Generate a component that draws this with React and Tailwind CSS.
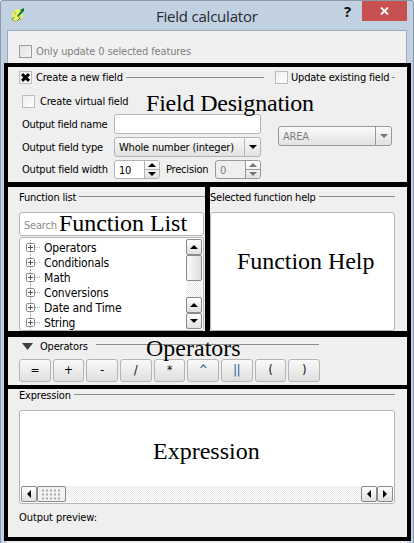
import React from "react";

const edge = "border border-[#b4b4b4] rounded-[3px]";

function Check({ checked, dim }) {
  return (
    <span className={`relative block h-[13px] w-[13px] shrink-0 border bg-gradient-to-br ${dim ? "border-[#9c9c9c] from-[#e4e4e4] to-[#f3f3f3]" : "border-[#bcbcbc] from-[#eeeeee] to-white"}`}>
      {checked && (
        <svg className="block h-[11px] w-[11px]" viewBox="0 0 11 11">
          <path d="M2 2.2L9 8.8M9 2.2L2 8.8" stroke="#000" strokeWidth="3" />
        </svg>
      )}
    </span>
  );
}

function Arrow({ dir, color = "#000" }) {
  const paths = {
    up: "M0 5L4 1L8 5Z",
    down: "M0 1L4 5L8 1Z",
    left: "M6 -1L2 3L6 7Z",
    right: "M2 -1L6 3L2 7Z",
  };
  return (
    <svg className="block h-[6px] w-[8px] overflow-visible" viewBox="0 0 8 6">
      <path d={paths[dir]} fill={color} />
    </svg>
  );
}

function Spin({ value, dim }) {
  const line = dim ? "border-[#999]" : "border-[#b4b4b4]";
  return (
    <div className={`flex h-[19px] w-[46px] shrink-0 overflow-hidden rounded-[3px] border ${line} ${dim ? "bg-[#efefef] text-[#808080]" : "bg-white"}`}>
      <span className="w-[29px] pl-[4px] leading-[19px]">{value}</span>
      <span className={`flex w-[15px] flex-col border-l ${line} bg-gradient-to-b from-white to-[#e2e2e2]`}>
        <span className={`flex h-[9px] items-center justify-center border-b ${line}`}><Arrow dir="up" color={dim ? "#777" : "#000"} /></span>
        <span className="flex h-[8px] items-center justify-center"><Arrow dir="down" color={dim ? "#777" : "#000"} /></span>
      </span>
    </div>
  );
}

function Combo({ value, dim, className }) {
  const line = dim ? "border-[#999]" : "border-[#b4b4b4]";
  return (
    <div className={`flex h-[20px] overflow-hidden rounded-[3px] border bg-gradient-to-b from-[#fafafa] to-[#e2e2e2] ${line} ${dim ? "text-[#808080]" : ""} ${className}`}>
      <span className="flex-1 pl-[4px] leading-[19px]">{value}</span>
      <span className={`flex w-[16px] items-center justify-center border-l ${line}`}><Arrow dir="down" color={dim ? "#777" : "#000"} /></span>
    </div>
  );
}

function ScrollButton({ dir }) {
  return (
    <span className="flex h-[16px] w-[16px] shrink-0 items-center justify-center rounded-[2px] border border-[#8a8a8a] bg-gradient-to-b from-white to-[#e0e0e0]">
      <Arrow dir={dir} />
    </span>
  );
}

const track = "bg-[repeating-conic-gradient(#e9e9e9_0_25%,#fbfbfb_0_50%)] bg-[length:2px_2px]";
const big = "absolute whitespace-nowrap font-['Liberation_Serif','Times_New_Roman',serif] text-[24px] leading-[28px] text-black";

const groups = ["Operators", "Conditionals", "Math", "Conversions", "Date and Time", "String"];
const operators = ["=", "+", "-", "/", "*", "^", "||", "(", ")"];

export default function App() {
  return (
    <div className="relative h-[543px] w-[414px] overflow-hidden whitespace-nowrap rounded-t-[3px] border-x border-t border-[#8c9aab] bg-[#c1d1e1] font-['DejaVu_Sans_Condensed','DejaVu_Sans',sans-serif] text-[11px] leading-[14px] tracking-[-0.19px] text-black">
      <header className="flex h-[29px] pl-[10px]">
        <svg className="mt-[7px] h-[15px] w-[14px]" viewBox="0 0 14 15">
          <path d="M1 6L3 2L7 1L11 3L12 8L9 12L5 13L1 11Z" fill="#e6f06c" />
          <path d="M3 3L5 7M8 8L10 13M2 13H5" stroke="#a9b63a" strokeWidth="1" fill="none" />
          <path d="M6 8L10 3L9 2L13 0L13 3L7 9Z" fill="#087c2d" />
          <path d="M1 12L3 9M6 13L9 10" stroke="#3b7d28" fill="none" />
        </svg>
        <h1 className="ml-[131px] mt-[5px] w-[177px] font-['Open_Sans',sans-serif] text-[15px] leading-[20px] tracking-[-0.22px] text-[#252a30]">Field calculator</h1>
        <span className="ml-[11px] mt-[1px] w-[12px] font-['Open_Sans',sans-serif] text-[15px] font-bold leading-[18px] text-[#111]">?</span>
        <span className="ml-[6px] flex h-[20px] w-[45px] items-center justify-center bg-[#c75050]">
          <svg className="h-[8px] w-[9px]" viewBox="0 0 9 8"><path d="M1 .5L8 7.5M8 .5L1 7.5" stroke="#fff" strokeWidth="1.8" /></svg>
        </span>
      </header>

      <div className="ml-[6px] h-[33px] w-[400px] border-x border-t border-[#9eacbb] bg-[#f0f0f0]">
        <div className="flex items-center gap-[4px] pl-[11px] pt-[13px] text-[#808080]">
          <Check dim />
          <span className="pt-px leading-[13px] tracking-[-0.13px]">Only update 0 selected features</span>
        </div>
      </div>

      <main className="ml-[3px] h-[478px] w-[407px] border-4 border-black bg-[#efefef]">
        <section className="h-[120px] border-b-[5px] border-black pt-[4px]">
          <div className="flex h-[13px] items-center pl-[11px]">
            <Check checked />
            <span className="ml-[4px] w-[90px] pt-px">Create a new field</span>
            <i className="h-px w-[138px] bg-[#8c8c8c]" />
            <span className="w-[11px]" />
            <Check />
            <span className="ml-[3px] w-[101px] pt-px">Update existing field</span>
            <i className="h-px w-[3px] bg-[#8c8c8c]" />
          </div>
          <div className="mt-[11px] flex h-[13px] items-center gap-[5px] pl-[14px]">
            <Check />
            <span className="pt-px">Create virtual field</span>
          </div>
          <div className="mt-[6px] flex items-center pl-[14px]">
            <div className="flex flex-col gap-[3px]">
              <div className="flex h-[20px] items-center">
                <span className="w-[92px] pt-px tracking-[-0.28px]">Output field name</span>
                <span className={`h-[20px] w-[147px] bg-white ${edge}`} />
              </div>
              <div className="flex h-[20px] items-center">
                <span className="w-[92px] pt-px">Output field type</span>
                <Combo value="Whole number (integer)" className="w-[147px]" />
              </div>
              <div className="flex h-[19px] items-center">
                <span className="w-[92px] pt-px">Output field width</span>
                <Spin value="10" />
                <span className="ml-[6px] w-[49px] pt-px">Precision</span>
                <Spin value="0" dim />
              </div>
            </div>
            <Combo value="AREA" dim className="mb-[21px] ml-[17px] w-[114px]" />
          </div>
        </section>

        <section className="flex h-[150px] border-b-[6px] border-black">
          <div className="w-[202px] border-r-[5px] border-black pl-[11px] pt-[3px]">
            <div className="flex h-[14px] items-center">
              <span className="w-[60px] pt-px">Function list</span>
              <i className="mb-[2px] h-px flex-1 bg-[#8c8c8c]" />
            </div>
            <div className={`mt-[8px] h-[24px] w-[185px] bg-white pl-[4px] leading-[25px] tracking-[-0.2px] text-[#8a8a8a] ${edge}`}>Search</div>
            <div className={`mt-[1px] flex h-[94px] w-[185px] justify-between bg-white pr-[1px] pt-px ${edge}`}>
              <ul className="pl-[5px] pt-px">
                {groups.map((g) => (
                  <li key={g} className="flex h-[15px] items-center">
                    <svg className="mr-[4px] h-[15px] w-[15px]" viewBox="0 0 15 15">
                      <path d="M5.5 0V15" stroke="#aaa" strokeDasharray="1 1" />
                      <path d="M10 7.5H15" stroke="#aaa" strokeDasharray="1 1" />
                      <rect x="1.5" y="3.5" width="8" height="8" rx="1" fill="#fff" stroke="#888" />
                      <path d="M3 7.5H8M5.5 5V10" stroke="#555" />
                    </svg>
                    <span className="text-[12px] tracking-[-0.15px]">{g}</span>
                  </li>
                ))}
              </ul>
              <div className={`flex h-[90px] w-[16px] flex-col ${track}`}>
                <ScrollButton dir="up" />
                <span className="h-[26px] rounded-[2px] border border-[#8a8a8a] bg-gradient-to-r from-[#fafafa] to-[#dedede]" />
                <span className="flex-1" />
                <ScrollButton dir="up" />
                <ScrollButton dir="down" />
              </div>
            </div>
          </div>
          <div className="w-[185px] pt-[3px]">
            <div className="flex h-[14px] items-center">
              <span className="w-[109px] pt-px tracking-[-0.25px]">Selected function help</span>
              <i className="mb-[2px] h-px flex-1 bg-[#8c8c8c]" />
            </div>
            <div className={`mt-[8px] h-[119px] bg-white ${edge}`} />
          </div>
        </section>

        <section className="h-[52px] border-b-4 border-black pl-[11px] pt-[2px]">
          <div className="flex h-[14px] items-center pl-[3px]">
            <svg className="h-[7px] w-[11px]" viewBox="0 0 11 7"><path d="M0 0H11L5.5 7Z" fill="#404040" /></svg>
            <span className="ml-[7px] w-[56px] pt-px">Operators</span>
            <i className="mb-[4px] h-px w-[223px] bg-[#8c8c8c]" />
          </div>
          <div className="mt-[6px] grid h-[23px] w-[301px] grid-cols-9 gap-[2px]">
            {operators.map((o) => (
              <button key={o} className={`bg-gradient-to-b from-[#fafafa] to-[#dedede] text-[12px] leading-[21px] ${edge} ${o === "||" || o === "^" ? "text-[#0a4f95]" : ""}`}>{o}</button>
            ))}
          </div>
        </section>

        <section className="pl-[11px]">
          <div className="flex h-[14px] w-[376px] items-center">
            <span className="w-[55px]">Expression</span>
            <i className="mb-[4px] h-px flex-1 bg-[#8c8c8c]" />
          </div>
          <div className={`mt-[7px] flex h-[94px] w-[376px] items-end bg-white px-px pb-px ${edge}`}>
            <div className={`flex h-[16px] w-full ${track}`}>
              <ScrollButton dir="left" />
              <span className="flex w-[29px] items-center justify-center rounded-[2px] border border-[#8a8a8a] bg-[#f2f2f2]">
                <svg className="h-[11px] w-[19px]" viewBox="0 0 19 11">
                  <path d="M0 1.5H19M0 5.5H19M0 9.5H19" stroke="#aaa" strokeWidth="2" strokeDasharray="2 2" />
                </svg>
              </span>
              <span className="flex-1" />
              <ScrollButton dir="left" />
              <ScrollButton dir="right" />
            </div>
          </div>
          <p className="mt-[7px] tracking-[-0.08px]">Output preview:</p>
        </section>
      </main>
      <div className="ml-[6px] h-[2px] w-[400px] bg-[#f0f0f0]" />

      <span className={`${big} left-[145px] top-[88px] tracking-[-0.2px]`}>Field Designation</span>
      <span className={`${big} left-[58px] top-[208px] tracking-[-0.05px]`}>Function List</span>
      <span className={`${big} left-[236px] top-[246px] tracking-[-0.05px]`}>Function Help</span>
      <span className={`${big} left-[145px] top-[333px] tracking-[0px]`}>Operators</span>
      <span className={`${big} left-[152px] top-[436px] tracking-[0px]`}>Expression</span>
    </div>
  );
}
